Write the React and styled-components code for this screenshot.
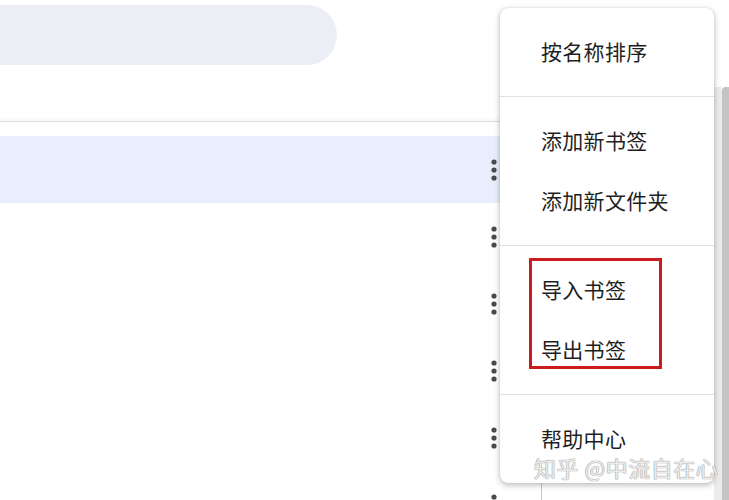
import React from 'react';
import styled, { createGlobalStyle } from 'styled-components';

const GlobalStyle = createGlobalStyle`
  html, body {
    margin: 0;
    padding: 0;
    background: #fff;
  }
  body {
    font-family: "Noto Sans CJK SC", "Noto Sans", sans-serif;
    overflow: hidden;
  }
`;

const Page = styled.div`
  position: relative;
  width: 729px;
  height: 500px;
  display: flex;
  overflow: hidden;
  background: #fff;
`;

const Main = styled.div`
  flex: 1;
  display: flex;
  flex-direction: column;
  min-width: 0;
`;

const Header = styled.header`
  flex: 0 0 121px;
  padding-top: 5px;
  box-sizing: border-box;
`;

const SearchPill = styled.div`
  margin-left: -40px;
  width: 377px;
  height: 60px;
  border-radius: 30px;
  background: #eceef6;
`;

const Body = styled.div`
  flex: 1;
  min-height: 0;
  display: flex;
  border-top: 1px solid #dcdcdf;
  box-shadow: 0 -2px 4px rgba(0, 0, 0, 0.04);
`;

const ListColumn = styled.div`
  width: 541px;
  padding-top: 14px;
  display: flex;
  flex-direction: column;
  overflow: hidden;
`;

const Row = styled.div`
  flex: 0 0 67px;
  display: flex;
  align-items: center;
  justify-content: flex-end;
  padding-right: 35px;
  background: ${({ $active }) => ($active ? '#e8eefb' : 'transparent')};
`;

const KebabButton = styled.span`
  width: 24px;
  height: 24px;
  display: flex;
  align-items: center;
  justify-content: center;
`;

const DetailPane = styled.div`
  flex: 1;
  border-left: 1px solid #c9c9c9;
`;

const RightRail = styled.div`
  width: 15px;
  margin-top: 87px;
  display: flex;
`;

const RailShade = styled.div`
  width: 8px;
  background: #ececec;
`;

const ScrollTrack = styled.div`
  flex: 1;
  background: #c4c4c4;
  border-top-left-radius: 4px;
`;

const Menu = styled.div`
  position: absolute;
  left: 500px;
  top: 8px;
  width: 214px;
  background: #fff;
  border-radius: 8px;
  box-shadow: 0 2px 6px rgba(0, 0, 0, 0.28), 0 0 1px rgba(0, 0, 0, 0.2);
`;

const MenuGroup = styled.div`
  padding: 14px 0;
  border-top: ${({ $first }) => ($first ? 'none' : '1px solid #e0e0e0')};
`;

const MenuItem = styled.div`
  height: 60px;
  box-sizing: border-box;
  padding: 0 0 3px 41px;
  display: flex;
  align-items: center;
  font-size: 21px;
  line-height: 24px;
  color: #1f1f1f;
  letter-spacing: 0.3px;
`;

const Callout = styled.div`
  position: absolute;
  left: 29px;
  top: 250px;
  width: 133px;
  height: 111px;
  box-sizing: border-box;
  border: 3px solid #cc1b1f;
  pointer-events: none;
`;

const Watermark = styled.div`
  position: absolute;
  left: 534px;
  top: 454px;
  font-size: 22px;
  line-height: 26px;
  color: rgba(255, 255, 255, 0.85);
  text-shadow: 0 0 1px #8a8a8a, 0 0 1px #8a8a8a;
  letter-spacing: 0.5px;
  white-space: nowrap;
  pointer-events: none;
`;

function Kebab() {
  return (
    <KebabButton>
      <svg width="6" height="22" viewBox="0 0 6 22">
        <circle cx="3" cy="3" r="2.6" fill="#4a4a4d" />
        <circle cx="3" cy="11" r="2.6" fill="#4a4a4d" />
        <circle cx="3" cy="19" r="2.6" fill="#4a4a4d" />
      </svg>
    </KebabButton>
  );
}

const groups = [
  ['按名称排序'],
  ['添加新书签', '添加新文件夹'],
  ['导入书签', '导出书签'],
  ['帮助中心'],
];

export default function App() {
  return (
    <>
      <GlobalStyle />
      <Page>
        <Main>
          <Header>
            <SearchPill />
          </Header>
          <Body>
            <ListColumn>
              {[0, 1, 2, 3, 4, 5].map((i) => (
                <Row key={i} $active={i === 0}>
                  <Kebab />
                </Row>
              ))}
            </ListColumn>
            <DetailPane />
          </Body>
        </Main>
        <RightRail>
          <RailShade />
          <ScrollTrack />
        </RightRail>

        <Menu>
          {groups.map((items, gi) => (
            <MenuGroup key={gi} $first={gi === 0}>
              {items.map((label) => (
                <MenuItem key={label}>{label}</MenuItem>
              ))}
            </MenuGroup>
          ))}
          <Callout />
        </Menu>

        <Watermark>知乎 @中流自在心</Watermark>
      </Page>
    </>
  );
}
